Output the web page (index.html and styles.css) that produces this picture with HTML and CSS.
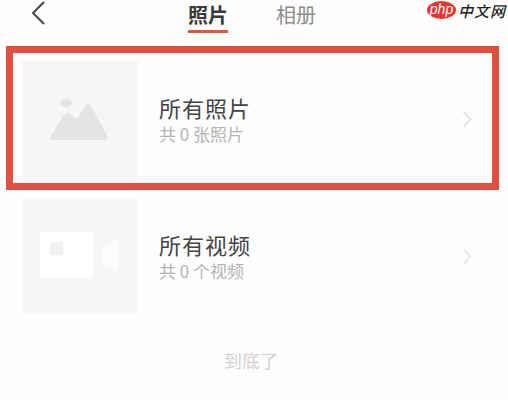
FILE: index.html
```html
<!DOCTYPE html>
<html lang="zh-CN">
<head>
  <meta charset="UTF-8">
  <meta name="viewport" content="width=device-width, initial-scale=1.0">
  <title>照片</title>
  <link rel="stylesheet" href="styles.css">
</head>
<body>
  <div class="logo">
    <span class="logo-badge">php</span>
    <span class="logo-text">中文网</span>
  </div>

  <header class="header">
    <svg class="back" width="16" height="26" viewBox="0 0 16 26">
      <path d="M14 2 L3 13 L14 24" fill="none" stroke="#444" stroke-width="2"/>
    </svg>
    <nav class="tabs">
      <div class="tab active">照片</div>
      <div class="tab">相册</div>
    </nav>
  </header>

  <div class="highlight">
    <div class="album">
      <div class="thumb">
        <svg width="116" height="116" viewBox="0 0 116 116">
          <path d="M44 37 L50 41 L50 43 L44 47 L38 43 L38 41 Z" fill="#e4e4e4"/>
          <path d="M30 79 Q27 79 29 75 L42 54 Q45 50 48 53 L55 58 L63 45 Q66 41 69 45 L85 74 Q87 79 83 79 Z" fill="#e4e4e4"/>
        </svg>
      </div>
      <div class="info">
        <div class="name">所有照片</div>
        <div class="count">共 0 张照片</div>
      </div>
      <svg class="arrow" width="10" height="17" viewBox="0 0 10 17">
        <path d="M1.5 1 L8.5 8.5 L1.5 16" fill="none" stroke="#dcdcdc" stroke-width="1.4"/>
      </svg>
    </div>
  </div>

  <div class="album second">
    <div class="thumb">
      <svg width="116" height="116" viewBox="0 0 116 116">
        <rect x="18" y="34" width="53" height="46" rx="4" fill="#fff"/>
        <rect x="28" y="44" width="13" height="13" rx="2" fill="#f0f0f0"/>
        <path d="M80 51 L96 39 L96 74 L80 66 Z" fill="#fcfcfc"/>
      </svg>
    </div>
    <div class="info">
      <div class="name">所有视频</div>
      <div class="count">共 0 个视频</div>
    </div>
    <svg class="arrow" width="10" height="17" viewBox="0 0 10 17">
      <path d="M1.5 1 L8.5 8.5 L1.5 16" fill="none" stroke="#e2e2e2" stroke-width="1.4"/>
    </svg>
  </div>

  <div class="end">到底了</div>
</body>
</html>
```

FILE: styles.css
```css
body {
  font-family: "Noto Sans CJK SC", "Noto Sans", sans-serif;
  margin: 0;
  background-color: #fefefe;
  overflow: hidden;
}

.header {
  display: flex;
  height: 46px;
  box-sizing: border-box;
  padding-left: 30px;
}

.back {
  flex-shrink: 0;
}

.tabs {
  display: flex;
  gap: 48px;
  margin-left: 142px;
}

.tab {
  width: 40px;
  height: 34px;
  line-height: 29px;
  font-size: 20px;
  white-space: nowrap;
  color: #8c8c8c;
}

.tab.active {
  color: #3a3a3a;
  font-weight: 700;
  border-bottom: 3px solid #e0553f;
  height: 30px;
}

.highlight {
  margin-left: 6px;
  width: 493px;
  height: 144px;
  box-sizing: border-box;
  border: 7px solid #e14f40;
  padding: 8px 0 0 9px;
}

.album {
  display: flex;
  align-items: center;
}

.album.second {
  margin: 8px 0 0 22px;
}

.thumb {
  width: 116px;
  height: 116px;
  flex-shrink: 0;
  background-color: #f6f6f6;
}

.thumb svg {
  display: block;
  filter: blur(0.6px);
}

.info {
  margin-left: 21px;
  width: 303px;
}

.name {
  font-size: 22px;
  line-height: 30px;
  letter-spacing: 1px;
  color: #444;
}

.count {
  font-size: 17px;
  line-height: 24px;
  color: #b4b4b4;
}

.end {
  margin-top: 34px;
  padding-right: 6px;
  text-align: center;
  font-size: 18px;
  line-height: 24px;
  color: #d2d2d2;
}

.logo {
  position: absolute;
  top: 0;
  left: 427px;
  display: flex;
  align-items: flex-start;
  gap: 2px;
}

.logo-badge {
  width: 29px;
  height: 18px;
  margin-top: 1px;
  border-radius: 50%;
  background-color: #e8352e;
  color: #fff;
  font-family: "Liberation Sans", sans-serif;
  font-size: 14px;
  font-style: italic;
  line-height: 16px;
  text-align: center;
}

.logo-text {
  font-size: 15px;
  line-height: 22px;
  letter-spacing: 1px;
  font-style: italic;
  font-weight: 500;
  white-space: nowrap;
  color: #222;
}
```
